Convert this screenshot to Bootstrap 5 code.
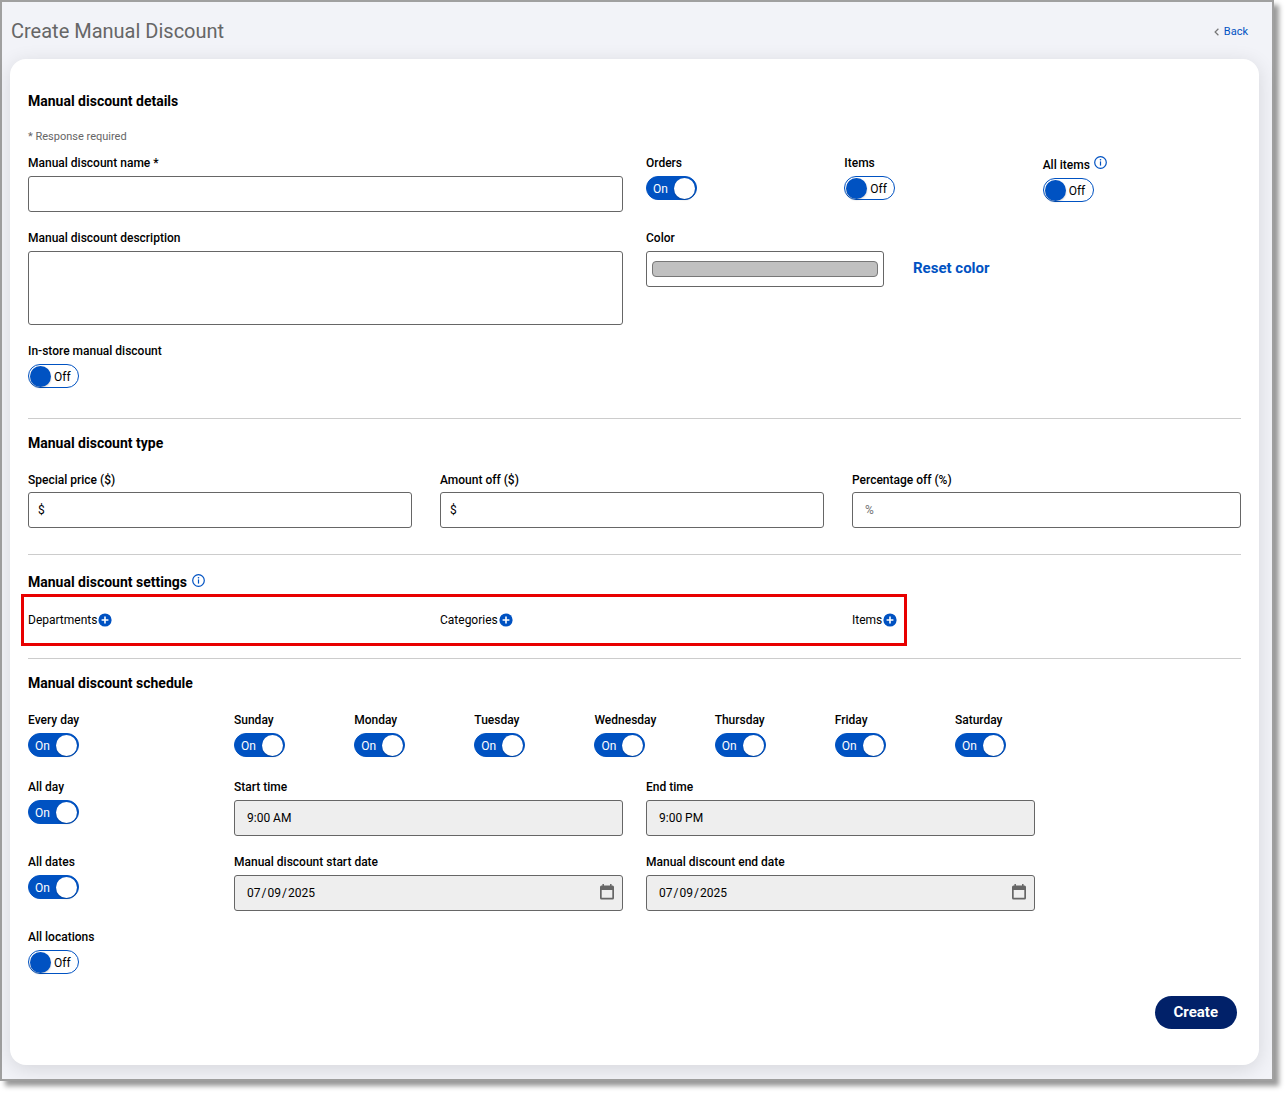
<!DOCTYPE html>
<html lang="en">
<head>
<meta charset="utf-8">
<meta name="viewport" content="width=device-width, initial-scale=1">
<title>Create Manual Discount</title>
<link href="https://cdn.jsdelivr.net/npm/bootstrap@5.3.0/dist/css/bootstrap.min.css" rel="stylesheet">
<style>
  :root { --blue: #0052c2; --navy: #012169; --line: #666; }
  body { font-family: Roboto, "Liberation Sans", sans-serif; font-size: 12px; line-height: 18px; color: #000; background: #fff; }
  .app-frame { margin: 0 12px 12px 0; border: 2px solid #a0a0a0; background: #f2f3f8; padding: 0 13px 14px 8px; box-shadow: 5px 5px 5px rgba(0,0,0,.4); }
  .page-head { height: 57px; padding: 0 11px 0 1px; }
  .page-title { font-size: 20px; line-height: 28px; font-weight: 400; color: #666; }
  .back-link { font-size: 11px; color: var(--blue); gap: 5px; padding-top: 2px; }
  .panel { background: #fff; border-radius: 16px; padding: 30px 18px 36px; box-shadow: 0 4px 20px rgba(0,0,0,.12); }
  .panel .row { --bs-gutter-x: 23px; }
  .section-title { font-size: 14px; line-height: 24px; font-weight: 700; margin: 0; }
  .hint { font-size: 11px; color: #666; margin: 15px 0 8px; }
  .field-label { display: block; font-weight: 500; margin-bottom: 4px; }
  .type-section .field-label { margin-bottom: 3px; }
  .short-field { padding-right: 5px; }
  .label-info { line-height: 18px; padding-top: 2px; }
  .form-control.field { height: 36px; padding: 0 12px; border: 1px solid var(--line); border-radius: 3px; font-size: 12px; line-height: 18px; color: #000; background: #fff; }
  .form-control.field:disabled { background: #eee; opacity: 1; }
  textarea.form-control.field { height: 74px; resize: none; display: block; }
  .form-control.money { padding-left: 9px; }
  .field::placeholder { color: #757575; }
  .form-control.color-field { width: 40%; padding: 9px 5px; }
  .color-field::-webkit-color-swatch-wrapper { padding: 0; }
  .color-field::-webkit-color-swatch { border: 1px solid #777; border-radius: 4px; }
  .reset-btn, .reset-btn:hover { font-size: 15px; font-weight: 700; color: var(--blue); padding: 0; border: 0; margin-left: 29px; line-height: 34px; }
  .field-row { margin-bottom: 17px; }
  .days-row { margin-bottom: 21px; }
  .day-col { flex: 0 0 11.6667%; }
  .toggle { display: grid; width: 51px; height: 24px; }
  .toggle > * { grid-area: 1 / 1; }
  .toggle input { appearance: none; margin: 0; width: 51px; height: 24px; border: 1px solid var(--blue); border-radius: 12px; background: #fff; display: flex; align-items: center; padding: 0 1px; }
  .toggle input::before { content: ""; width: 21px; height: 21px; border-radius: 50%; background: var(--blue); box-shadow: 0 1px 2px rgba(0,0,0,.2); }
  .toggle input:checked { background: var(--blue); justify-content: flex-end; }
  .toggle input:checked::before { background: #fff; }
  .toggle .state { pointer-events: none; align-self: center; padding-left: 26px; padding-top: 1px; }
  .toggle input:checked + .state { padding-left: 7px; color: #fff; }
  .rule { border: 0; border-top: 1px solid #ccc; opacity: 1; margin: 30px 0 12px; }
  .type-section + .rule { margin: 26px 0 15px; }
  .settings-section + .rule { margin-top: 12px; }
  .settings-row { height: 52px; }
  .marker { position: absolute; top: 0; bottom: 0; left: -7px; width: calc(73% + 1px); border: 3px solid #e80000; pointer-events: none; }
  .add-btn { border: 0; background: none; padding: 0; display: inline-flex; margin-left: 1px; }
  .info-btn { border: 0; background: none; padding: 2px 0 0; display: inline-flex; align-items: flex-start; margin-left: 4px; }
  .title-info { padding-top: 4px; margin-left: 5px; }
  .date-wrap input::-webkit-calendar-picker-indicator { display: none; }
  .date-wrap input::-webkit-datetime-edit-text { padding: 0 1px; }
  .date-icon { position: absolute; right: 9px; top: 9px; pointer-events: none; }
  .form-foot { margin-top: 22px; padding-right: 4px; }
  .create-btn, .create-btn:hover { background: var(--navy); color: #fff; border: 0; border-radius: 17px; font-size: 15px; font-weight: 700; line-height: 33px; padding: 0 19px; }
</style>
<script src="https://cdn.jsdelivr.net/npm/bootstrap@5.3.0/dist/js/bootstrap.bundle.min.js"></script>
</head>
<body>
<svg width="0" height="0" class="d-none" aria-hidden="true">
  <symbol id="i-info" viewBox="0 0 13 13"><circle cx="6.5" cy="6.5" r="5.8" fill="none" stroke="#0052c2" stroke-width="1.2"/><path d="M6.5 5.4v4.2" stroke="#0052c2" stroke-width="1.2"/><circle cx="6.5" cy="3.7" r=".8" fill="#0052c2"/></symbol>
  <symbol id="i-plus" viewBox="0 0 14 14"><circle cx="7" cy="7" r="6.6" fill="#0052c2"/><path d="M7 3.6v6.8M3.6 7h6.8" stroke="#fff" stroke-width="1.6"/></symbol>
  <symbol id="i-cal" viewBox="0 0 14 16"><path d="M1.5 1.5h11a1.5 1.5 0 0 1 1.500 1.500v11a1.500 1.500 0 0 1-1.500 1.500h-11a1.500 1.500 0 0 1-1.500-1.500V3a1.500 1.500 0 0 1 1.500-1.500zM1.700 6v7.800h10.600V6z" fill="#666" fill-rule="evenodd"/><path d="M3.200 0v2M10.800 0v2" stroke="#666" stroke-width="1.500"/></symbol>
</svg>
<div class="app-frame">
  <header class="page-head d-flex align-items-center justify-content-between">
    <h1 class="page-title m-0">Create Manual Discount</h1>
    <a href="#" class="back-link d-flex align-items-center text-decoration-none">
      <svg width="5" height="8" viewBox="0 0 5 8" fill="none" stroke="#777" stroke-width="1.200"><path d="M4.400 .8 1.100 4l3.300 3.200"/></svg>Back</a>
  </header>
  <main class="panel">
    <form>
      <section>
        <h2 class="section-title">Manual discount details</h2>
        <p class="hint">* Response required</p>
        <div class="row field-row">
          <div class="col-6">
            <label class="field-label" for="name">Manual discount name *</label>
            <input type="text" class="form-control field" id="name" required>
          </div>
          <div class="col-6 d-flex">
            <div class="w-100">
              <label class="field-label" for="orders">Orders</label>
              <span class="toggle"><input type="checkbox" role="switch" id="orders" checked><span class="state">On</span></span>
            </div>
            <div class="w-100">
              <label class="field-label" for="items">Items</label>
              <span class="toggle"><input type="checkbox" role="switch" id="items"><span class="state">Off</span></span>
            </div>
            <div class="w-100">
              <div class="d-flex">
                <label class="field-label label-info" for="allitems">All items</label>
                <button type="button" class="info-btn" aria-label="About all items"><svg width="13" height="13"><use href="#i-info"/></svg></button>
              </div>
              <span class="toggle"><input type="checkbox" role="switch" id="allitems"><span class="state">Off</span></span>
            </div>
          </div>
        </div>
        <div class="row field-row">
          <div class="col-6">
            <label class="field-label" for="desc">Manual discount description</label>
            <textarea class="form-control field" id="desc"></textarea>
          </div>
          <div class="col-6">
            <label class="field-label" for="color">Color</label>
            <div class="d-flex align-items-start">
              <input type="color" class="form-control field color-field" id="color" value="#c0c0c0">
              <button type="button" class="btn reset-btn">Reset color</button>
            </div>
          </div>
        </div>
        <label class="field-label" for="instore">In-store manual discount</label>
        <span class="toggle"><input type="checkbox" role="switch" id="instore"><span class="state">Off</span></span>
      </section>
      <hr class="rule">
      <section class="type-section">
        <h2 class="section-title mb-3">Manual discount type</h2>
        <div class="row">
          <div class="col-4">
            <div class="short-field">
              <label class="field-label" for="price">Special price ($)</label>
              <input type="text" class="form-control field money" id="price" value="$">
            </div>
          </div>
          <div class="col-4">
            <div class="short-field">
              <label class="field-label" for="amount">Amount off ($)</label>
              <input type="text" class="form-control field money" id="amount" value="$">
            </div>
          </div>
          <div class="col-4">
            <label class="field-label" for="percent">Percentage off (%)</label>
            <input type="text" class="form-control field" id="percent" placeholder="%">
          </div>
        </div>
      </section>
      <hr class="rule">
      <section class="settings-section">
        <div class="d-flex">
          <h2 class="section-title">Manual discount settings</h2>
          <button type="button" class="info-btn title-info" aria-label="About settings"><svg width="13" height="13"><use href="#i-info"/></svg></button>
        </div>
        <div class="position-relative">
          <div class="row settings-row align-items-center">
            <div class="col-4 d-flex align-items-center">Departments<button type="button" class="add-btn" aria-label="Add departments"><svg width="14" height="14"><use href="#i-plus"/></svg></button></div>
            <div class="col-4 d-flex align-items-center">Categories<button type="button" class="add-btn" aria-label="Add categories"><svg width="14" height="14"><use href="#i-plus"/></svg></button></div>
            <div class="col-4 d-flex align-items-center">Items<button type="button" class="add-btn" aria-label="Add items"><svg width="14" height="14"><use href="#i-plus"/></svg></button></div>
          </div>
          <div class="marker"></div>
        </div>
      </section>
      <hr class="rule">
      <section>
        <h2 class="section-title mb-3">Manual discount schedule</h2>
        <div class="row days-row">
          <div class="col-2">
            <label class="field-label" for="every">Every day</label>
            <span class="toggle"><input type="checkbox" role="switch" id="every" checked><span class="state">On</span></span>
          </div>
          <div class="col-10">
            <div class="row">
              <div class="day-col"><label class="field-label" for="sun">Sunday</label><span class="toggle"><input type="checkbox" role="switch" id="sun" checked><span class="state">On</span></span></div>
              <div class="day-col"><label class="field-label" for="mon">Monday</label><span class="toggle"><input type="checkbox" role="switch" id="mon" checked><span class="state">On</span></span></div>
              <div class="day-col"><label class="field-label" for="tue">Tuesday</label><span class="toggle"><input type="checkbox" role="switch" id="tue" checked><span class="state">On</span></span></div>
              <div class="day-col"><label class="field-label" for="wed">Wednesday</label><span class="toggle"><input type="checkbox" role="switch" id="wed" checked><span class="state">On</span></span></div>
              <div class="day-col"><label class="field-label" for="thu">Thursday</label><span class="toggle"><input type="checkbox" role="switch" id="thu" checked><span class="state">On</span></span></div>
              <div class="day-col"><label class="field-label" for="fri">Friday</label><span class="toggle"><input type="checkbox" role="switch" id="fri" checked><span class="state">On</span></span></div>
              <div class="day-col"><label class="field-label" for="sat">Saturday</label><span class="toggle"><input type="checkbox" role="switch" id="sat" checked><span class="state">On</span></span></div>
            </div>
          </div>
        </div>
        <div class="row field-row">
          <div class="col-2">
            <label class="field-label" for="allday">All day</label>
            <span class="toggle"><input type="checkbox" role="switch" id="allday" checked><span class="state">On</span></span>
          </div>
          <div class="col-4">
            <label class="field-label" for="start">Start time</label>
            <input type="text" class="form-control field" id="start" value="9:00 AM" disabled>
          </div>
          <div class="col-4">
            <label class="field-label" for="end">End time</label>
            <input type="text" class="form-control field" id="end" value="9:00 PM" disabled>
          </div>
        </div>
        <div class="row field-row">
          <div class="col-2">
            <label class="field-label" for="alldates">All dates</label>
            <span class="toggle"><input type="checkbox" role="switch" id="alldates" checked><span class="state">On</span></span>
          </div>
          <div class="col-4">
            <label class="field-label" for="sdate">Manual discount start date</label>
            <div class="date-wrap position-relative">
              <input type="date" class="form-control field" id="sdate" value="2025-07-09" disabled>
              <svg class="date-icon" width="14" height="16"><use href="#i-cal"/></svg>
            </div>
          </div>
          <div class="col-4">
            <label class="field-label" for="edate">Manual discount end date</label>
            <div class="date-wrap position-relative">
              <input type="date" class="form-control field" id="edate" value="2025-07-09" disabled>
              <svg class="date-icon" width="14" height="16"><use href="#i-cal"/></svg>
            </div>
          </div>
        </div>
        <label class="field-label" for="allloc">All locations</label>
        <span class="toggle"><input type="checkbox" role="switch" id="allloc"><span class="state">Off</span></span>
      </section>
      <div class="form-foot d-flex justify-content-end">
        <button type="submit" class="btn create-btn">Create</button>
      </div>
    </form>
  </main>
</div>
</body>
</html>
